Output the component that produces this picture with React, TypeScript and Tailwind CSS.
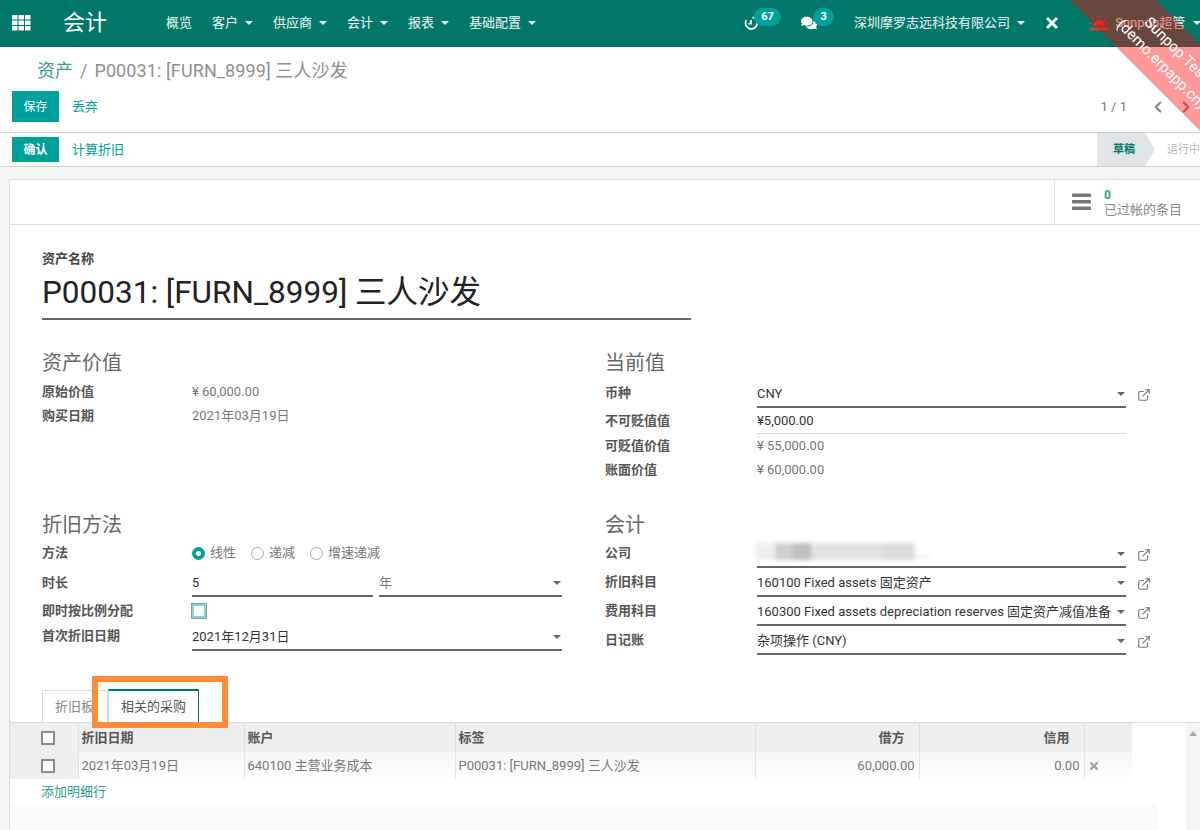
import type { ReactNode } from 'react'
import { ChevronLeft, ChevronRight, ExternalLink } from 'lucide-react'
import { FaComments, FaTimes } from 'react-icons/fa'

function Caret({ className = '' }: { className?: string }) {
  return <span className={`inline-block w-0 h-0 border-x-[4px] border-x-transparent border-t-[4px] border-t-current ${className}`} />
}

function NavItem({ label, caret = true, ml }: { label: string; caret?: boolean; ml: string }) {
  return (
    <span className={`flex items-center shrink-0 whitespace-nowrap text-[13px] text-[#f2f8f7] ${ml}`}>
      {label}
      {caret && <Caret className="ml-[7px]" />}
    </span>
  )
}

function Badge({ children, className = '' }: { children: ReactNode; className?: string }) {
  return (
    <span className={`absolute top-[8px] h-[18px] rounded-full bg-[#00a09d] text-white text-[11px] font-bold flex items-center justify-center ${className}`}>
      {children}
    </span>
  )
}

function Label({ children, wide = false }: { children: ReactNode; wide?: boolean }) {
  return <span className={`${wide ? 'w-[152px]' : 'w-[150px]'} shrink-0 text-[13px] font-bold text-[#555]`}>{children}</span>
}

function Plain({ label, value, h, wide = false }: { label: string; value: string; h: string; wide?: boolean }) {
  return (
    <div className={`flex items-center ${h}`}>
      <Label wide={wide}>{label}</Label>
      <span className="text-[13px] text-[#777]">{value}</span>
    </div>
  )
}

function Field({ children, select = false, light = false, className = 'flex-1' }: { children?: ReactNode; select?: boolean; light?: boolean; className?: string }) {
  return (
    <div className={`h-[27px] flex items-center justify-between text-[13px] text-[#333] ${light ? 'border-b border-[#d8d8d8]' : 'border-b-2 border-[#666]'} ${className}`}>
      <span className="truncate">{children}</span>
      {select && <Caret className="text-[#666] ml-1 shrink-0 mr-[1px]" />}
    </div>
  )
}

function M2O({ label, value, h = 'h-[29px]' }: { label: string; value?: ReactNode; h?: string }) {
  return (
    <div className={`flex items-start ${h}`}>
      <span className="h-[24px] flex items-center"><Label wide>{label}</Label></span>
      <Field select className="w-[369px]">{value}</Field>
      <ExternalLink size={14} className="text-[#777] ml-[11px] mt-[7px]" />
    </div>
  )
}

function Radio({ label, on = false }: { label: string; on?: boolean }) {
  return (
    <span className="flex items-center mr-[15px] text-[13px] text-[#777]">
      {on ? (
        <span className="w-[13px] h-[13px] rounded-full border-[4px] border-[#00a09d] bg-white mr-[5px]" />
      ) : (
        <span className="w-[13px] h-[13px] rounded-full border border-[#aaa] bg-white mr-[5px]" />
      )}
      {label}
    </span>
  )
}

function Section({ title }: { title: string }) {
  return <h2 className="h-[26px] flex items-center text-[20px] text-[#666]">{title}</h2>
}

function CheckBox() {
  return <span className="block w-[14px] h-[14px] border-2 border-[#888] bg-white ml-[31px]" />
}

export default function App() {
  return (
    <div
      className="relative w-[1200px] h-[830px] overflow-hidden bg-[#f5f5f5] flex flex-col"
      style={{ fontFamily: 'Roboto, "Noto Sans CJK SC", sans-serif' }}
    >
      {/* Top bar */}
      <header className="h-[47px] shrink-0 bg-[#01786a] border-b border-[#06655a] flex items-center text-white">
        <svg width="19" height="16" viewBox="0 0 19 16" className="ml-[12px] shrink-0" fill="#fff">
          {[0, 5.5, 11].map((y) =>
            [0, 6.5, 13].map((x) => <rect key={`${x}-${y}`} x={x} y={y} width="5.5" height="4.5" rx="0.5" />)
          )}
        </svg>
        <span className="ml-[32px] text-[22px] leading-none text-white whitespace-nowrap shrink-0">会计</span>
        <NavItem label="概览" caret={false} ml="ml-[59px]" />
        <NavItem label="客户" ml="ml-[20px]" />
        <NavItem label="供应商" ml="ml-[20px]" />
        <NavItem label="会计" ml="ml-[20px]" />
        <NavItem label="报表" ml="ml-[20px]" />
        <NavItem label="基础配置" ml="ml-[20px]" />

        <div className="relative ml-[208px] w-[38px] h-[46px] flex items-center shrink-0">
          <svg width="14" height="14" viewBox="0 0 14 14" fill="none" stroke="#fff" strokeWidth="1.8">
            <path d="M8.5 1.4A5.8 5.8 0 1 1 2.4 4" />
            <path d="M7 4v3.6h-2.6" />
          </svg>
          <Badge className="left-[10px] w-[27px]">67</Badge>
        </div>
        <div className="relative ml-[19px] w-[34px] h-[46px] flex items-center shrink-0">
          <FaComments size={16} className="text-white" />
          <Badge className="left-[12px] w-[21px]">3</Badge>
        </div>
        <span className="ml-[19px] flex items-center shrink-0 text-[13px] text-[#f2f8f7] whitespace-nowrap">
          深圳摩罗志远科技有限公司
          <Caret className="ml-[7px]" />
        </span>
        <svg width="14" height="14" viewBox="0 0 14 14" className="ml-[20px] shrink-0" stroke="#f2f8f7" strokeWidth="3">
          <path d="M2 2l10 10M12 2L2 12" />
        </svg>
        <svg width="22" height="17" viewBox="0 0 22 17" className="ml-[29px] shrink-0" fill="#d8432a">
          <path d="M5 11a6 6 0 0 1 12 0z" />
          <path d="M11 1v2.5M4 3.5l1.6 2M18 3.5l-1.6 2M1 8l2.4.8M21 8l-2.4.8" stroke="#d8432a" strokeWidth="1.2" />
          <rect x="1" y="12.5" width="20" height="3" rx="1" />
        </svg>
        <span className="ml-[5px] flex items-center shrink-0 text-[13px] text-[#f2f8f7] whitespace-nowrap">
          Sunpop超管
          <Caret className="ml-[8px]" />
        </span>
      </header>

      {/* Control panel */}
      <section className="shrink-0 bg-white">
        <div className="h-[86px] border-b border-[#ccd0d4] flex flex-col">
          <div className="h-[44px] pl-[37px] pt-[13px] text-[18px] leading-[22px] text-[#8f8f8f] whitespace-nowrap">
            <span className="text-[#3d9a90]">资产</span>
            <span className="mx-[7px]">/</span>
            <span className="tracking-[0.1px]">P00031: [FURN_8999] 三人沙发</span>
          </div>
          <div className="flex items-center pl-[12px]">
            <button className="w-[47px] h-[31px] bg-[#00a09d] text-white text-[12px]">保存</button>
            <span className="ml-[13px] text-[13px] text-[#00a09d]">丢弃</span>
            <span className="ml-auto text-[13px] text-[#777]">1 / 1</span>
            <ChevronLeft size={18} strokeWidth={3} className="text-[#888] ml-[22px]" />
            <ChevronRight size={18} strokeWidth={3} className="text-[#888] ml-[10px] mr-[5px]" />
          </div>
        </div>
        <div className="h-[34px] border-b border-[#ccd0d4] flex items-center pl-[12px]">
          <button className="w-[47px] h-[25px] bg-[#00a09d] text-white text-[12px] font-bold">确认</button>
          <span className="ml-[13px] text-[13px] text-[#00a09d]">计算折旧</span>
          <div className="ml-auto flex items-center h-full">
            <span className="w-[58px] h-full bg-[#e2e5e8] text-[#01786a] text-[11px] font-bold flex items-center pl-[16px] pt-[2px] [clip-path:polygon(0_0,48px_0,100%_50%,48px_100%,0_100%)]">
              草稿
            </span>
            <span className="ml-[12px] w-[33px] pt-[2px] overflow-hidden whitespace-nowrap text-[11px] text-[#b5b5b5]">运行中</span>
          </div>
        </div>
      </section>

      {/* Sheet */}
      <main className="mt-[12px] ml-[9px] flex-1 min-h-0 bg-white border-l border-t border-[#dcdfe2] flex flex-col">
        <div className="h-[45px] shrink-0 border-b border-[#dcdfe2] flex justify-end">
          <div className="w-[146px] border-l border-[#dcdfe2] flex items-center pl-[17px]">
            <svg width="20" height="18" viewBox="0 0 20 18" fill="#777">
              <rect x="0" y="0.5" width="19" height="3.4" rx="1" />
              <rect x="0" y="7" width="19" height="3.4" rx="1" />
              <rect x="0" y="13.5" width="19" height="3.4" rx="1" />
            </svg>
            <div className="ml-[12px] flex flex-col whitespace-nowrap">
              <span className="text-[12px] leading-[14px] font-bold text-[#2e9c8e]">0</span>
              <span className="text-[13px] leading-[15px] text-[#888]">已过帐的条目</span>
            </div>
          </div>
        </div>

        <div className="pl-[32px] shrink-0">
          <div className="pt-[26px] text-[13px] leading-[16px] font-bold text-[#444]">资产名称</div>
          <div className="w-[649px] h-[53px] border-b-2 border-[#666] flex items-center text-[31.5px] text-[#222] whitespace-nowrap">
            P00031: [FURN_8999] 三人沙发
          </div>

          <div className="mt-[30px] grid grid-cols-[563px_1fr]">
            <div className="h-[162px]">
              <Section title="资产价值" />
              <div className="h-[4px]" />
              <Plain label="原始价值" value="¥ 60,000.00" h="h-[24px]" />
              <Plain label="购买日期" value="2021年03月19日" h="h-[24px]" />
            </div>
            <div className="h-[162px]">
              <Section title="当前值" />
              <div className="mt-[5px]">
                <M2O label="币种" value="CNY" h="h-[28px]" />
              </div>
              <div className="flex items-start h-[25px]">
                <span className="h-[24px] flex items-center"><Label wide>不可贬值值</Label></span>
                <Field light className="w-[369px] !h-[25px]">¥5,000.00</Field>
              </div>
              <Plain label="可贬值价值" value="¥ 55,000.00" h="h-[24px]" wide />
              <Plain label="账面价值" value="¥ 60,000.00" h="h-[24px]" wide />
            </div>

            <div>
              <Section title="折旧方法" />
              <div className="flex items-center h-[30px]">
                <Label>方法</Label>
                <Radio label="线性" on />
                <Radio label="递减" />
                <Radio label="增速递减" />
              </div>
              <div className="flex items-start h-[30px] w-[520px]">
                <span className="h-[30px] flex items-center"><Label>时长</Label></span>
                <Field className="w-[181px] mt-[2px]">5</Field>
                <Field select className="w-[183px] ml-[6px] mt-[2px]"><span className="text-[#777]">年</span></Field>
              </div>
              <div className="flex items-center h-[26px]">
                <Label>即时按比例分配</Label>
                <span className="w-[14px] h-[14px] border-2 border-[#7fd8d4] outline outline-1 outline-[#8a9a9a] bg-white" />
              </div>
              <div className="flex items-start h-[26px] w-[520px]">
                <span className="h-[24px] flex items-center"><Label>首次折旧日期</Label></span>
                <Field select>2021年12月31日</Field>
              </div>
            </div>
            <div>
              <Section title="会计" />
              <div className="mt-[3px]">
                <div className="relative">
                  <M2O label="公司" />
                  <div className="absolute left-[150px] top-[2px] w-[175px] h-[17px] flex blur-[2px]">
                    <span className="w-[20px] bg-[#eeeeee]" />
                    <span className="w-[18px] bg-[#cfcfcf]" />
                    <span className="w-[18px] bg-[#bdbdbd]" />
                    <span className="w-[70px] bg-[#e3e3e3]" />
                    <span className="w-[34px] bg-[#dcdcdc]" />
                    <span className="w-[15px] mt-[12px] h-[4px] bg-[#eeeeee]" />
                  </div>
                </div>
                <M2O label="折旧科目" value="160100 Fixed assets 固定资产" />
                <M2O label="费用科目" value="160300 Fixed assets depreciation reserves 固定资产减值准备" />
                <M2O label="日记账" value="杂项操作 (CNY)" />
              </div>
            </div>
          </div>
        </div>

        {/* Tabs */}
        <div className="relative mt-[31px] h-[35px] shrink-0 pl-[32px] border-b border-[#d8dadd] flex items-end">
          <span className="w-[66px] h-[32px] border border-b-0 border-[#d8dadd] pl-[12px] flex items-center text-[13px] text-[#888] whitespace-nowrap overflow-hidden">
            折旧板
          </span>
          <span className="w-[91px] h-[33px] border-t-2 border-x border-t-[#01786a] border-r-[#01786a] border-l-[#d8dadd] bg-white flex items-center justify-center text-[13px] text-[#555]">
            相关的采购
          </span>
          <span className="absolute left-[82px] top-[-12px] w-[136px] h-[52px] border-[6px] border-[#ff8c3a]" />
        </div>

        {/* Lines table */}
        <div className="flex-1 min-h-0 flex">
          <div className="w-[1122px]">
            <table className="w-full table-fixed border-collapse text-[13px]">
              <colgroup>
                <col className="w-[68px]" />
                <col className="w-[166px]" />
                <col className="w-[211px]" />
                <col className="w-[300px]" />
                <col className="w-[164px]" />
                <col className="w-[165px]" />
                <col className="w-[48px]" />
              </colgroup>
              <thead>
                <tr className="h-[29px] bg-[#eeeeee] text-[#555] font-bold">
                  <th className="font-normal"><CheckBox /></th>
                  <th className="text-left pl-[3px] border-l border-[#dddddd]">折旧日期</th>
                  <th className="text-left pl-[3px] border-l border-[#dddddd]">账户</th>
                  <th className="text-left pl-[3px] border-l border-[#dddddd]">标签</th>
                  <th className="text-right pr-[14px] border-l border-[#dddddd]">借方</th>
                  <th className="text-right pr-[14px] border-l border-[#dddddd]">信用</th>
                  <th className="border-l border-[#dddddd]" />
                </tr>
              </thead>
              <tbody>
                <tr className="h-[27px] text-[#777] bg-gradient-to-b from-[#f5f5f5] to-white">
                  <td className="bg-[#eeeeee]"><CheckBox /></td>
                  <td className="pl-[3px] border-l border-[#e2e2e2]">2021年03月19日</td>
                  <td className="pl-[3px] border-l border-[#e2e2e2]">640100 主营业务成本</td>
                  <td className="pl-[3px] border-l border-[#e2e2e2] whitespace-nowrap">P00031: [FURN_8999] 三人沙发</td>
                  <td className="text-right pr-[4px] border-l border-[#e2e2e2]">60,000.00</td>
                  <td className="text-right pr-[4px] border-l border-[#e2e2e2]">0.00</td>
                  <td className="pl-[3px] border-l border-[#e2e2e2]"><FaTimes size={12} className="text-[#9aa5ad]" /></td>
                </tr>
              </tbody>
            </table>
            <div className="h-[25px] pl-[31px] flex items-center text-[13px] text-[#2e9c8e]">添加明细行</div>
            <div className="h-[30px] w-[1147px] bg-[#fafafa]" />
          </div>
          <div className="ml-auto w-[14px] bg-[#f5f5f5] flex justify-center pt-[8px]">
            <span className="w-0 h-0 border-x-[4px] border-x-transparent border-b-[5px] border-b-[#aaa]" />
          </div>
        </div>
      </main>

      {/* Test ribbon */}
      <div className="absolute left-[1024px] top-[31px] w-[300px] h-[61px] rotate-45 bg-[rgba(255,0,0,0.4)] text-white text-[15px] leading-[21px] pr-[14px] flex flex-col items-center justify-center pointer-events-none">
        <span>Sunpop Test</span>
        <span>(demo.erpapp.cn)</span>
      </div>
    </div>
  )
}
